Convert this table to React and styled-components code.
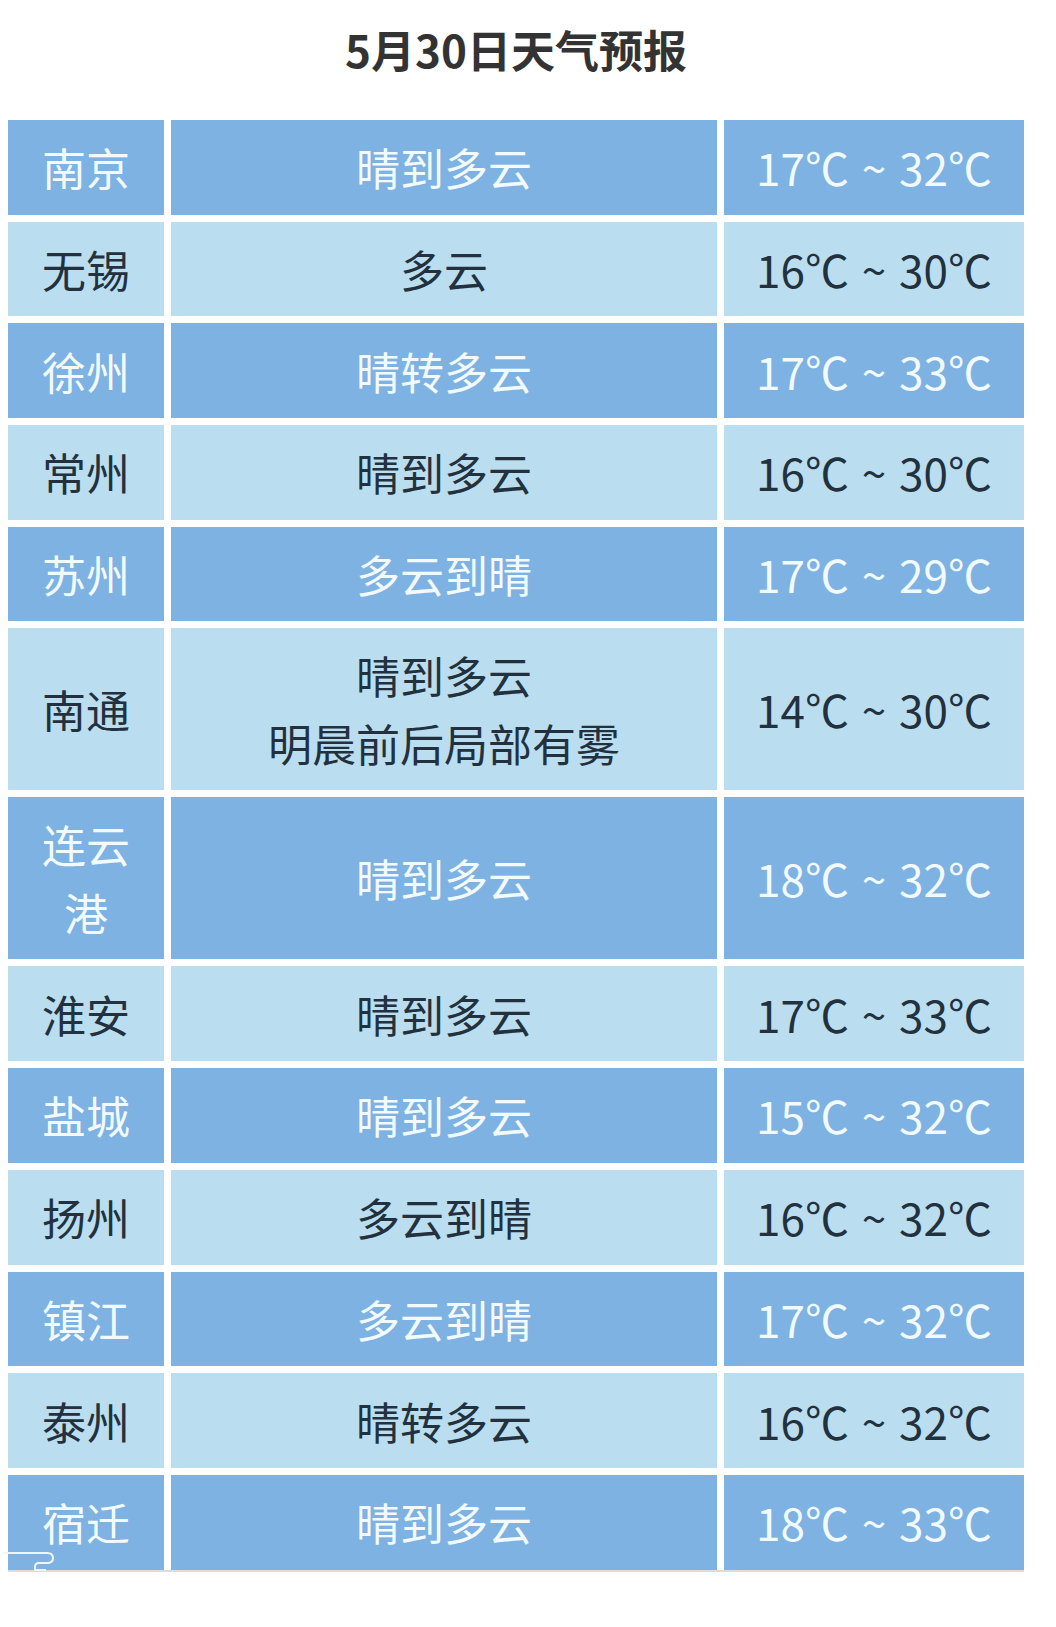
import styled, { createGlobalStyle } from "styled-components";

const GlobalStyle = createGlobalStyle`
  body {
    margin: 0;
    background: #ffffff;
    font-family: "Noto Sans CJK SC", "Noto Sans", sans-serif;
  }
`;

const forecast = [
  { city: ["南京"], weather: ["晴到多云"], temp: "17℃ ~ 32℃" },
  { city: ["无锡"], weather: ["多云"], temp: "16℃ ~ 30℃" },
  { city: ["徐州"], weather: ["晴转多云"], temp: "17℃ ~ 33℃" },
  { city: ["常州"], weather: ["晴到多云"], temp: "16℃ ~ 30℃" },
  { city: ["苏州"], weather: ["多云到晴"], temp: "17℃ ~ 29℃" },
  {
    city: ["南通"],
    weather: ["晴到多云", "明晨前后局部有雾"],
    temp: "14℃ ~ 30℃",
    tall: true,
  },
  { city: ["连云", "港"], weather: ["晴到多云"], temp: "18℃ ~ 32℃", tall: true },
  { city: ["淮安"], weather: ["晴到多云"], temp: "17℃ ~ 33℃" },
  { city: ["盐城"], weather: ["晴到多云"], temp: "15℃ ~ 32℃" },
  { city: ["扬州"], weather: ["多云到晴"], temp: "16℃ ~ 32℃" },
  { city: ["镇江"], weather: ["多云到晴"], temp: "17℃ ~ 32℃" },
  { city: ["泰州"], weather: ["晴转多云"], temp: "16℃ ~ 32℃" },
  { city: ["宿迁"], weather: ["晴到多云"], temp: "18℃ ~ 33℃" },
];

const App = () => {
  return (
    <>
      <GlobalStyle />
      <Page>
        <Title>5月30日天气预报</Title>
        <Table>
          {forecast.map(({ city, weather, temp, tall }, i) => {
            const dark = i % 2 === 0;
            return (
              <Row key={city.join("")} $tall={tall}>
                <Cell $dark={dark}>
                  {city.map((line) => (
                    <Line key={line}>{line}</Line>
                  ))}
                </Cell>
                <Cell $dark={dark}>
                  {weather.map((line) => (
                    <Line key={line}>{line}</Line>
                  ))}
                </Cell>
                <Cell $dark={dark}>
                  <Temp>{temp}</Temp>
                </Cell>
              </Row>
            );
          })}
          <Curl viewBox="0 0 60 24" width="60" height="24">
            <path
              d="M3 3 H47 Q53 3 53 8 Q53 13 47 13 H39 Q35 13 35 17 V20 H46"
              fill="none"
              stroke="#eef6fb"
              strokeWidth="2"
            />
          </Curl>
        </Table>
      </Page>
    </>
  );
};

export default App;

const Page = styled.div`
  width: 1056px;
  padding: 19px 0 60px 8px;
  box-sizing: border-box;
`;

const Title = styled.h1`
  width: 1016px;
  margin: 0 0 41px;
  height: 60px;
  line-height: 60px;
  text-align: center;
  font-size: 44px;
  font-weight: 700;
  color: #333333;
`;

const Table = styled.div`
  position: relative;
  width: 1016px;
  display: flex;
  flex-direction: column;
  gap: 7px;
  box-shadow: 0 2px 0 #dcdcdc;
`;

const Row = styled.div`
  display: grid;
  grid-template-columns: 156px 546px 300px;
  column-gap: 7px;
  height: ${({ $tall }) => ($tall ? "162px" : "94.7px")};
`;

const Cell = styled.div`
  display: flex;
  flex-direction: column;
  align-items: center;
  justify-content: center;
  background: ${({ $dark }) => ($dark ? "#7db2e2" : "#badef0")};
  color: ${({ $dark }) => ($dark ? "#f3fafd" : "#22313d")};
  font-size: 44px;
  font-weight: 400;
`;

const Line = styled.span`
  display: block;
  line-height: 68px;
  white-space: nowrap;
`;

const Temp = styled(Line)`
  word-spacing: 3px;
`;

const Curl = styled.svg`
  position: absolute;
  left: -8px;
  bottom: -4px;
`;
